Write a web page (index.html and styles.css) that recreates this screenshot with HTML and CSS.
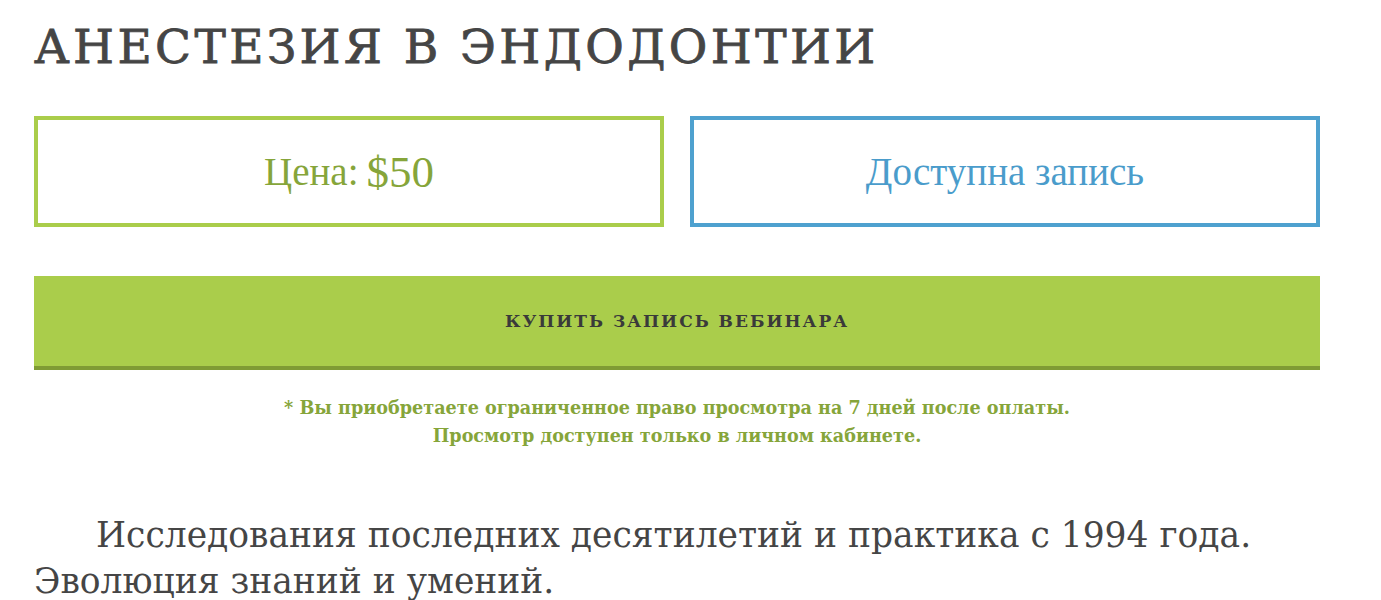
FILE: index.html
```html
<!DOCTYPE html>
<html lang="ru">
<head>
<meta charset="utf-8">
<title>Анестезия в эндодонтии</title>
<link rel="stylesheet" href="styles.css">
</head>
<body>
<main class="page">
  <h1 class="title">Анестезия в эндодонтии</h1>
  <div class="info-row">
    <div class="info-box info-box--price">Цена: <span class="price">$50</span></div>
    <div class="info-box info-box--status">Доступна запись</div>
  </div>
  <a class="buy-button" href="#">Купить запись вебинара</a>
  <p class="note">* Вы приобретаете ограниченное право просмотра на 7 дней после оплаты.<br>Просмотр доступен только в личном кабинете.</p>
  <p class="lead">Исследования последних десятилетий и практика с 1994 года. Эволюция знаний и умений.</p>
</main>
</body>
</html>
```

FILE: styles.css
```css
html, body {
  margin: 0;
  background: #ffffff;
}

.page {
  width: 1286px;
  padding: 0 0 0 34px;
  font-family: "DejaVu Serif", serif;
  color: #444444;
}

.title {
  margin: 0;
  padding-top: 16px;
  font-family: "DejaVu Serif", serif;
  font-size: 47px;
  font-weight: normal;
  line-height: 62px;
  letter-spacing: 3.4px;
  text-transform: uppercase;
  color: #454545;
  -webkit-text-stroke: 0.8px #454545;
}

.info-row {
  display: grid;
  grid-template-columns: 1fr 1fr;
  gap: 26px;
  margin-top: 38px;
}

.info-box {
  height: 103px;
  border: 4px solid;
  display: flex;
  align-items: center;
  justify-content: center;
  font-family: "Liberation Serif", serif;
  font-size: 39px;
}

.info-box--price {
  border-color: #aacd4b;
  color: #86a53a;
}

.price {
  font-size: 45px;
  margin-left: 8px;
}

.info-box--status {
  border-color: #4ea1cf;
  color: #4a9ccb;
}

.buy-button {
  display: flex;
  align-items: center;
  justify-content: center;
  margin-top: 49px;
  height: 90px;
  background: #aacd4b;
  border-bottom: 4px solid #7f9b34;
  color: #3a3a3a;
  font-size: 17px;
  font-weight: bold;
  letter-spacing: 2px;
  text-transform: uppercase;
  text-decoration: none;
}

.note {
  margin: 24px 0 0;
  text-align: center;
  font-size: 17.6px;
  font-weight: bold;
  line-height: 28px;
  color: #86a53a;
}

.lead {
  margin: 62px 0 0;
  text-indent: 62px;
  font-family: "DejaVu Serif", serif;
  font-size: 34.5px;
  line-height: 46px;
  color: #454545;
}
```
